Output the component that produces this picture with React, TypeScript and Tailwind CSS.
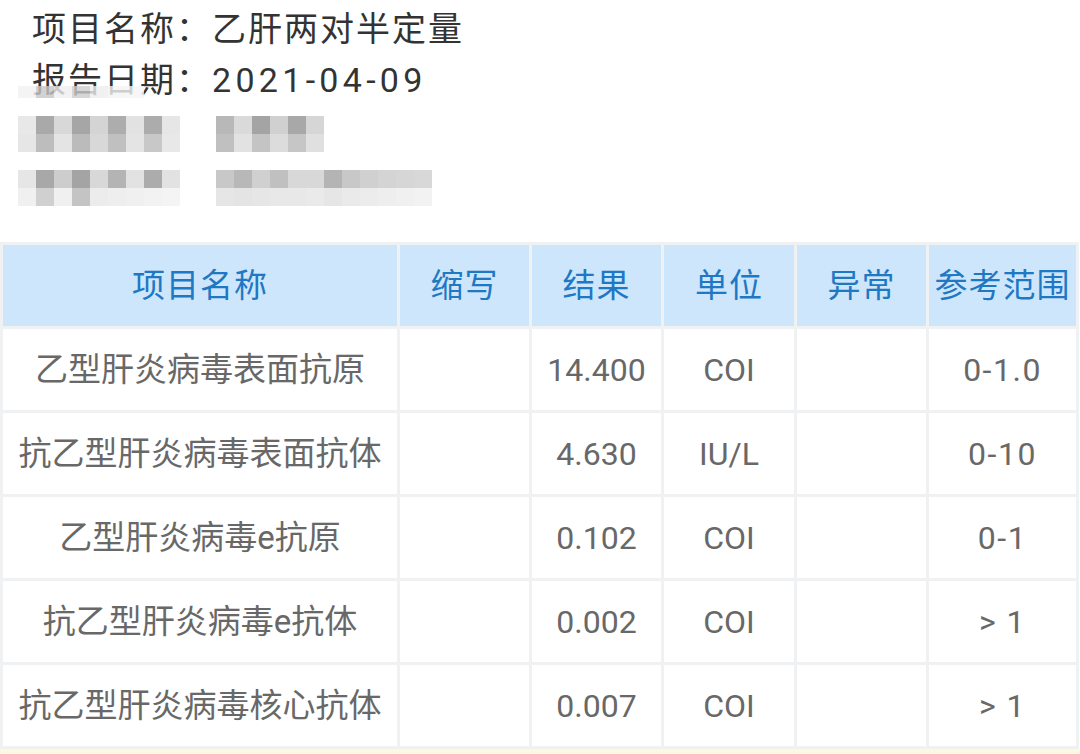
import React from "react";

type Row = { name: string; abbr: string; result: string; unit: string; flag: string; range: string };

const rows: Row[] = [
  { name: "乙型肝炎病毒表面抗原", abbr: "", result: "14.400", unit: "COI", flag: "", range: "0-1.0" },
  { name: "抗乙型肝炎病毒表面抗体", abbr: "", result: "4.630", unit: "IU/L", flag: "", range: "0-10" },
  { name: "乙型肝炎病毒e抗原", abbr: "", result: "0.102", unit: "COI", flag: "", range: "0-1" },
  { name: "抗乙型肝炎病毒e抗体", abbr: "", result: "0.002", unit: "COI", flag: "", range: "> 1" },
  { name: "抗乙型肝炎病毒核心抗体", abbr: "", result: "0.007", unit: "COI", flag: "", range: "> 1" },
];

const headers = ["项目名称", "缩写", "结果", "单位", "异常", "参考范围"];

// mosaic blocks standing in for the blurred patient info
const mosaic: string[][][] = [
  [
    [
      ["#e8e8e8", "#a9a9a9", "#d8d8d8", "#a6a6a6", "#d4d4d4", "#adadad", "#e2e2e2", "#acacac", "#e6e6e6"],
      ["#e6e6e6", "#bdbdbd", "#e4e4e4", "#bbbbbb", "#d8d8d8", "#c0c0c0", "#e4e4e4", "#c8c8c8", "#e8e8e8"],
    ],
    [
      ["#b8b8b8", "#dadada", "#a4a4a4", "#d0d0d0", "#a8a8a8", "#d6d6d6"],
      ["#c0c0c0", "#e2e2e2", "#c4c4c4", "#dcdcdc", "#c6c6c6", "#e0e0e0"],
    ],
  ],
  [
    [
      ["#e6e6e6", "#a8a8a8", "#cdcdcd", "#a4a4a4", "#d8d8d8", "#b4b4b4", "#e2e2e2", "#acacac", "#e2e2e2"],
      ["#f0f0f0", "#d0d0d0", "#f0f0f0", "#c4c4c4", "#ececec", "#eeeeee", "#f0f0f0", "#f2f2f2", "#f4f4f4"],
    ],
    [
      ["#c8c8c8", "#b8b8b8", "#d0d0d0", "#c0c0c0", "#d8d8d8", "#d8d8d8", "#b4b4b4", "#c8c8c8", "#d0d0d0", "#d4d4d4", "#d6d6d6", "#d8d8d8"],
      ["#e6e6e6", "#e4e4e4", "#e6e6e6", "#e8e8e8", "#e8e8e8", "#eaeaea", "#e6e6e6", "#eaeaea", "#ececec", "#eeeeee", "#f0f0f0", "#f2f2f2"],
    ],
  ],
];

function Mosaic({ groups }: { groups: string[][][] }) {
  return (
    <div className="flex gap-[36px] pl-[18px]">
      {groups.map((g, gi) => (
        <div key={gi} className="flex flex-col">
          {g.map((line, li) => (
            <div key={li} className="flex">
              {line.map((c, ci) => (
                <div key={ci} className="w-[18px] h-[18px]" style={{ backgroundColor: c }} />
              ))}
            </div>
          ))}
        </div>
      ))}
    </div>
  );
}

export default function App() {
  return (
    <div
      className="w-[1080px] h-[754px] overflow-hidden bg-white relative"
      style={{ fontFamily: 'Roboto, "Noto Sans CJK SC", sans-serif' }}
    >
      <div className="pl-[32px] pt-[4px] text-[34px] leading-[51px] tracking-[2px] text-[#333333]">
        <div>项目名称：乙肝两对半定量</div>
        <div>
          报告日期：<span className="tracking-[4.3px]">2021-04-09</span>
        </div>
      </div>

      {/* blur strip over the bottom of the date label */}
      <div className="absolute left-[18px] top-[86px] flex opacity-80">
        {["#f2f2f2", "#c8c8c8", "#f0f0f0", "#cccccc", "#eeeeee", "#f4f4f4", "#f6f6f6"].map((c, i) => (
          <div key={i} className="w-[18px] h-[12px]" style={{ backgroundColor: c }} />
        ))}
      </div>

      <div className="mt-[10px] flex flex-col gap-[18px]">
        <Mosaic groups={mosaic[0]} />
        <Mosaic groups={mosaic[1]} />
      </div>

      <div className="mt-[36px] bg-[#eff1f3] p-[3px] w-[1079px]">
        <div className="grid grid-cols-[394px_129px_129px_130px_129px_147px] auto-rows-[81px] gap-[3px] text-[33px]">
          {headers.map((h) => (
            <div
              key={h}
              className="bg-[#cde6fb] text-[#1f78c4] flex items-center justify-center whitespace-nowrap tracking-[1px]"
            >
              {h}
            </div>
          ))}
          {rows.map((r) => (
            <React.Fragment key={r.name}>
              <div className="bg-white text-[#686868] flex items-center justify-center whitespace-nowrap">{r.name}</div>
              <div className="bg-white" />
              <div className="bg-white text-[#686868] flex items-center justify-center text-[32px]">{r.result}</div>
              <div className="bg-white text-[#686868] flex items-center justify-center text-[32px]">{r.unit}</div>
              <div className="bg-white" />
              <div className="bg-white text-[#686868] flex items-center justify-center text-[32px] tracking-[1.5px]">{r.range}</div>
            </React.Fragment>
          ))}
        </div>
      </div>
      <div className="h-[20px] bg-[#fdf9e1]" />
    </div>
  );
}
